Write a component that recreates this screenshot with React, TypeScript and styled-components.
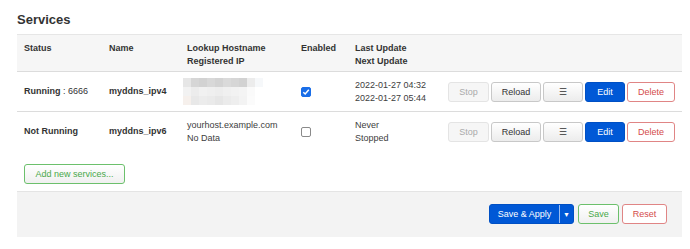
import React from 'react';
import styled, { createGlobalStyle, css } from 'styled-components';

const GlobalStyle = createGlobalStyle`
  body {
    margin: 0;
    background: #fff;
    font-family: "Liberation Sans", Arial, sans-serif;
    color: #404040;
  }
`;

const Page = styled.div`
  padding: 12px 8px 0 17px;
  width: 665px;
`;

const Heading = styled.h3`
  margin: 0 0 6px 0;
  font-size: 13px;
  font-weight: bold;
  color: #333;
  line-height: 16px;
`;

const Grid = styled.div`
  display: grid;
  grid-template-columns: 85px 78px 114px 54px 93px 241px;
`;

const Row = styled.div<{ $head?: boolean }>`
  display: contents;
  & > div {
    border-top: 1px solid ${p => (p.$head ? '#e6e6e6' : '#dcdcdc')};
    background: ${p => (p.$head ? '#f6f6f6' : '#fff')};
    height: ${p => (p.$head ? 38 : 40)}px;
    ${p =>
      p.$head &&
      css`
        border-bottom: 1px solid #dcdcdc;
        margin-bottom: -1px;
      `}
  }
`;

const Cell = styled.div<{ $bold?: boolean; $top?: boolean }>`
  padding: ${p => (p.$top ? '7px' : '0')} 0 0 7px;
  font-size: 9px;
  line-height: 13px;
  font-weight: ${p => (p.$bold ? 'bold' : 'normal')};
  color: ${p => (p.$bold ? '#333' : '#404040')};
  display: flex;
  flex-direction: column;
  justify-content: ${p => (p.$top ? 'flex-start' : 'center')};
  box-sizing: border-box;
`;

const Port = styled.span`
  font-weight: normal;
`;

const Actions = styled.div`
  display: flex;
  align-items: center;
  gap: 2px;
`;

const Btn = styled.button<{ $kind?: 'default' | 'disabled' | 'primary' | 'danger' | 'positive'; $w: number }>`
  width: ${p => p.$w}px;
  height: 20px;
  padding: 0;
  font-family: inherit;
  font-size: 9px;
  border-radius: 3px;
  border: 1px solid #c8c8c8;
  background: linear-gradient(#fff, #ececec);
  color: #333;
  cursor: pointer;
  ${p =>
    p.$kind === 'disabled' &&
    css`
      background: #f6f6f6;
      border-color: #e4e4e4;
      color: #aaa;
    `}
  ${p =>
    p.$kind === 'primary' &&
    css`
      background: #0058d6;
      border-color: #0050c4;
      color: #fff;
    `}
  ${p =>
    p.$kind === 'danger' &&
    css`
      background: #fff;
      border-color: #e08585;
      color: #d44b4b;
    `}
  ${p =>
    p.$kind === 'positive' &&
    css`
      background: linear-gradient(#fff, #f0f0f0);
      border-color: #6cc06c;
      color: #4aa84a;
    `}
`;

const Check = styled.span<{ $on?: boolean }>`
  display: inline-flex;
  align-items: center;
  justify-content: center;
  width: 10px;
  height: 10px;
  border-radius: 2px;
  box-sizing: border-box;
  border: 1px solid ${p => (p.$on ? '#1a6ee8' : '#8a8a8a')};
  background: ${p => (p.$on ? '#1a6ee8' : '#fff')};
`;

const AddRow = styled.div`
  padding: 12px 0 7px 7px;
`;

const Footer = styled.div`
  background: #f3f3f3;
  border-top: 1px solid #e4e4e4;
  height: 46px;
  display: flex;
  justify-content: flex-end;
  align-items: flex-start;
  padding: 12px 15px 0 0;
  box-sizing: border-box;
  gap: 3px;
`;

const Split = styled.div`
  display: flex;
  height: 20px;
  border-radius: 3px;
  overflow: hidden;
  background: #0058d6;
  border: 1px solid #0050c4;
  box-sizing: border-box;
  color: #fff;
  font-size: 9px;
  margin-right: 1px;
`;

const SplitMain = styled.span`
  width: 69px;
  display: flex;
  align-items: center;
  justify-content: center;
  border-right: 1px solid #9bbcf0;
`;

const SplitCaret = styled.span`
  width: 13px;
  display: flex;
  align-items: center;
  justify-content: center;
  font-size: 7px;
`;

const Mosaic = () => {
  const cells = [
    ['#e6e6e6', '#d6d6d6', '#d2d2d2', '#d8d8d8', '#d3d3d3', '#dadada', '#d6d6d6', '#d2d2d2', '#ececec', '#f6f8fa'],
    ['#f2f2f2', '#ececec', '#f1f1f1', '#efefef', '#ededed', '#f0f0f0', '#f2f2f2', '#f4f4f4', '#fafafa', '#ffffff'],
    ['#f6f0ec', '#e8e8e8', '#ececec', '#eaeaea', '#e6e6e6', '#ebebeb', '#eeeeee', '#f3f3f3', '#fbfbfb', '#ffffff'],
  ];
  return (
    <svg width="80" height="27" viewBox="0 0 80 27" style={{ display: 'block', marginLeft: -4 }}>
      {cells.map((r, y) => r.map((c, x) => <rect key={`${x}-${y}`} x={x * 8} y={y * 9} width="8" height="9" fill={c} />))}
    </svg>
  );
};

const Tick = () => (
  <svg width="8" height="8" viewBox="0 0 8 8">
    <path d="M1.3 4.2 L3.2 6 L6.8 1.8" fill="none" stroke="#fff" strokeWidth="1.5" />
  </svg>
);

interface Service {
  running: boolean;
  pid?: string;
  name: string;
  host?: string;
  ip?: string;
  enabled: boolean;
  last: string;
  next: string;
}

const services: Service[] = [
  { running: true, pid: '6666', name: 'myddns_ipv4', enabled: true, last: '2022-01-27 04:32', next: '2022-01-27 05:44' },
  { running: false, name: 'myddns_ipv6', host: 'yourhost.example.com', ip: 'No Data', enabled: false, last: 'Never', next: 'Stopped' },
];

export default function App() {
  return (
    <Page>
      <GlobalStyle />
      <Heading>Services</Heading>
      <Grid>
        <Row $head>
          <Cell $bold $top>Status</Cell>
          <Cell $bold $top>Name</Cell>
          <Cell $bold $top>
            <span>Lookup Hostname</span>
            <span>Registered IP</span>
          </Cell>
          <Cell $bold $top>Enabled</Cell>
          <Cell $bold $top>
            <span>Last Update</span>
            <span>Next Update</span>
          </Cell>
          <Cell />
        </Row>
        {services.map(s => (
          <Row key={s.name}>
            <Cell $bold>
              <span>
                {s.running ? 'Running' : 'Not Running'}
                {s.pid && <Port> : {s.pid}</Port>}
              </span>
            </Cell>
            <Cell $bold>{s.name}</Cell>
            <Cell>
              {s.host ? (
                <>
                  <span>{s.host}</span>
                  <span>{s.ip}</span>
                </>
              ) : (
                <Mosaic />
              )}
            </Cell>
            <Cell>
              <Check $on={s.enabled}>{s.enabled && <Tick />}</Check>
            </Cell>
            <Cell>
              <span>{s.last}</span>
              <span>{s.next}</span>
            </Cell>
            <Cell>
              <Actions>
                <Btn $kind="disabled" $w={41}>Stop</Btn>
                <Btn $w={50}>Reload</Btn>
                <Btn $w={40}>☰</Btn>
                <Btn $kind="primary" $w={40}>Edit</Btn>
                <Btn $kind="danger" $w={48}>Delete</Btn>
              </Actions>
            </Cell>
          </Row>
        ))}
      </Grid>
      <AddRow>
        <Btn $kind="positive" $w={101}>Add new services...</Btn>
      </AddRow>
      <Footer>
        <Split>
          <SplitMain>Save &amp; Apply</SplitMain>
          <SplitCaret>▼</SplitCaret>
        </Split>
        <Btn $kind="positive" $w={41}>Save</Btn>
        <Btn $kind="danger" $w={45}>Reset</Btn>
      </Footer>
    </Page>
  );
}
